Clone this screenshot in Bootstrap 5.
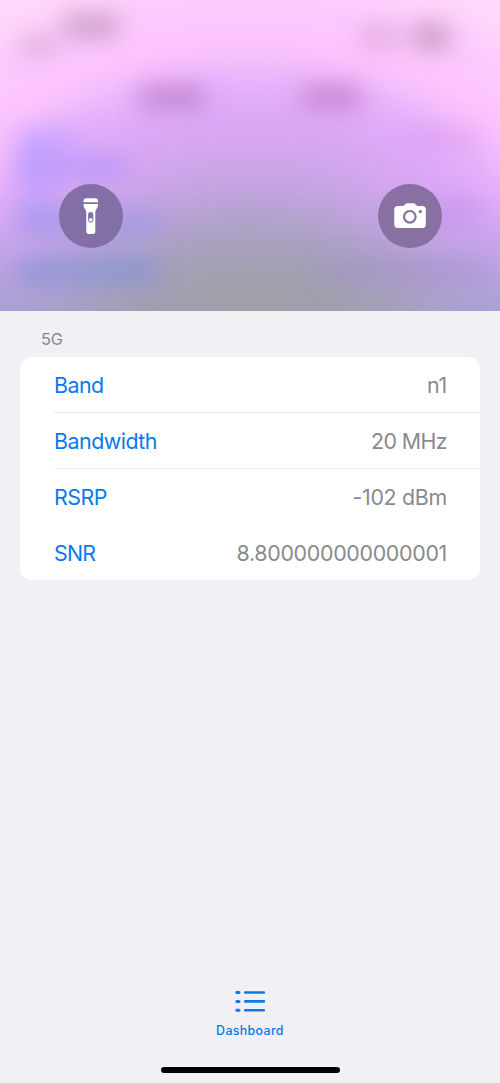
<!DOCTYPE html>
<html lang="en">
<head>
<meta charset="utf-8">
<meta name="viewport" content="width=device-width, initial-scale=1">
<title>Dashboard</title>
<link href="https://cdn.jsdelivr.net/npm/bootstrap@5.3.0/dist/css/bootstrap.min.css" rel="stylesheet">
<style>
body{background:#f1f0f5;font-family:Inter,"Liberation Sans",sans-serif;color:#8a8a8e}
.screen{height:1083px}
.cover{height:311px;padding:184px 58px 0 58.5px}
.backdrop{inset:0;width:100%;height:100%}
.round-btn{width:64px;height:64px;background:#816fa5;border:0}
.round-btn.cam{background:#8870a2}
.section-label{font-size:16.4px;line-height:20px;padding:18px 0 7.5px 41px;letter-spacing:-.3px}
.cells{margin:0 20px;background:#fff;border-radius:12px;padding-left:34px;height:223.5px}
.cell{height:56px;padding:2px 33px 0 0;font-size:21.4px;border-bottom:1px solid #ececef}
.cell:nth-child(2){border-color:#f3f3f5}
.cell:nth-child(n+3){border-color:transparent}
.cell dt{font-weight:400;color:#0a7aea}
.tab{color:#0a7aea;font-size:12.4px;font-weight:500;line-height:16px;letter-spacing:.35px;margin-bottom:28px}
.tab span{margin-top:10px}
.home-bar{width:179px;height:6px;background:#000;margin-bottom:10px}
</style>
</head>
<body>
<div class="screen d-flex flex-column overflow-hidden">
  <header class="cover position-relative overflow-hidden d-flex justify-content-between align-items-start">
    <svg class="backdrop position-absolute" viewBox="0 0 500 311" aria-hidden="true">
      <defs>
        <radialGradient id="glow" gradientUnits="userSpaceOnUse" cx="0" cy="0" r="1" gradientTransform="translate(250 330) scale(460 370)">
          <stop offset="0" stop-color="#a09fa8"/>
          <stop offset=".14" stop-color="#a2a0ae"/>
          <stop offset=".24" stop-color="#aca2c2"/>
          <stop offset=".34" stop-color="#baa3d6"/>
          <stop offset=".44" stop-color="#cba5e8"/>
          <stop offset=".57" stop-color="#dca8f5"/>
          <stop offset=".66" stop-color="#e6affb"/>
          <stop offset=".72" stop-color="#f3bcfd"/>
          <stop offset=".79" stop-color="#fdc6fd"/>
          <stop offset=".9" stop-color="#fdcafd"/>
          <stop offset="1.08" stop-color="#fed9fb"/>
        </radialGradient>
        <radialGradient id="haze" gradientUnits="userSpaceOnUse" cx="0" cy="0" r="1" gradientTransform="translate(250 350) scale(300 150)">
          <stop offset="0" stop-color="#a09fa8"/>
          <stop offset=".5" stop-color="#a19fab" stop-opacity=".7"/>
          <stop offset="1" stop-color="#a7a0c8" stop-opacity="0"/>
        </radialGradient>
        <linearGradient id="shade" x1="0" y1="0" x2="0" y2="1">
          <stop offset=".62" stop-color="#a39fda" stop-opacity="0"/>
          <stop offset="1" stop-color="#a39fd2" stop-opacity=".85"/>
        </linearGradient>
        <linearGradient id="sides" x1="0" y1="0" x2="1" y2="0">
          <stop offset="0" stop-color="#fff"/>
          <stop offset=".42" stop-color="#000"/>
          <stop offset=".58" stop-color="#000"/>
          <stop offset="1" stop-color="#fff"/>
        </linearGradient>
        <mask id="edges"><rect width="500" height="311" fill="url(#sides)"/></mask>
        <filter id="base" filterUnits="userSpaceOnUse" x="-80" y="-80" width="660" height="480"><feGaussianBlur stdDeviation="10"/></filter>
        <filter id="soft" filterUnits="userSpaceOnUse" x="-60" y="-60" width="620" height="440"><feGaussianBlur stdDeviation="12"/></filter>
      </defs>
      <rect x="-50" y="-50" width="600" height="411" fill="url(#glow)" filter="url(#base)"/>
      <rect width="500" height="311" fill="url(#shade)" mask="url(#edges)"/>
      <rect width="500" height="311" fill="url(#haze)"/>
      <g filter="url(#soft)">
        <rect x="64" y="15" width="54" height="22" fill="#b58aae" opacity=".72"/>
        <rect x="20" y="38" width="38" height="16" fill="#c091b6" opacity=".55"/>
        <rect x="362" y="29" width="28" height="18" fill="#c088b8" opacity=".6"/>
        <rect x="395" y="30" width="20" height="15" fill="#c088b8" opacity=".4"/>
        <rect x="418" y="26" width="30" height="22" fill="#b080a4" opacity=".78"/>
        <rect x="140" y="87" width="64" height="20" fill="#b070ba" opacity=".74"/>
        <rect x="303" y="87" width="58" height="20" fill="#b26fb9" opacity=".74"/>
        <rect x="405" y="130" width="75" height="16" fill="#d08de8" opacity=".45"/>
        <rect x="18" y="130" width="62" height="16" fill="#b69eff" opacity=".75"/>
        <rect x="18" y="158" width="108" height="19" fill="#ac92ff" opacity=".8"/>
        <rect x="18" y="140" width="38" height="90" fill="#b09aff" opacity=".45"/>
        <rect x="18" y="212" width="139" height="20" fill="#8f94e6" opacity=".65"/>
        <rect x="18" y="260" width="140" height="23" fill="#7b90d2" opacity=".68"/>
        <rect x="430" y="195" width="50" height="36" fill="#bd88ef" opacity=".35"/>
        <rect x="325" y="262" width="160" height="18" fill="#9384be" opacity=".4"/>
      </g>
    </svg>
    <button class="round-btn rounded-circle position-relative p-0" aria-label="Flashlight">
      <svg class="d-block" width="64" height="64" viewBox="0 0 64 64">
        <path fill="#fff" d="M27.500 14.200h8.500a3 3 0 0 1 3 3v1H24.500v-1a3 3 0 0 1 3-3ZM24.500 20h14.500v1.200c0 3-2.700 4.300-2.700 7V47.500q0 2.500-2.500 2.500h-4q-2.500 0-2.500-2.500V28.200c0-2.700-2.800-4-2.800-7Z"/>
        <rect x="29.100" y="28" width="5.200" height="10.400" rx="2.600" fill="#816fa5"/>
        <circle cx="31.700" cy="35.700" r="1.800" fill="#fff"/>
      </svg>
    </button>
    <button class="round-btn cam rounded-circle position-relative p-0" aria-label="Camera">
      <svg class="d-block" width="64" height="64" viewBox="0 0 64 64">
        <path fill="#fff" d="M19.800 22h4.500c2.300 0 2.600-2.800 5-2.800h6c2.400 0 2.700 2.800 5 2.800h4q3.500 0 3.500 3.500V40.500q0 3.500-3.500 3.500H19.800q-3.500 0-3.500-3.500V25.500q0-3.500 3.500-3.500Z"/>
        <circle cx="31.800" cy="32.800" r="5.800" fill="none" stroke="#8870a2" stroke-width="2.200"/>
        <circle cx="42.300" cy="27.600" r="1.600" fill="#8870a2"/>
      </svg>
    </button>
  </header>
  <main class="flex-grow-1">
    <div class="section-label">5G</div>
    <dl class="cells mb-0">
      <div class="cell d-flex justify-content-between align-items-center"><dt style="letter-spacing:-.55px">Band</dt><dd class="mb-0" style="letter-spacing:-.2px">n1</dd></div>
      <div class="cell d-flex justify-content-between align-items-center"><dt style="letter-spacing:-.5px">Bandwidth</dt><dd class="mb-0" style="letter-spacing:-.6px">20 MHz</dd></div>
      <div class="cell d-flex justify-content-between align-items-center"><dt style="letter-spacing:-.5px">RSRP</dt><dd class="mb-0" style="letter-spacing:-.3px">-102 dBm</dd></div>
      <div class="cell d-flex justify-content-between align-items-center"><dt style="letter-spacing:-.8px">SNR</dt><dd class="mb-0" style="letter-spacing:-.31px">8.800000000000001</dd></div>
    </dl>
  </main>
  <footer class="d-flex flex-column align-items-center">
    <a class="tab d-flex flex-column align-items-center text-decoration-none" href="#">
      <svg width="32" height="24" viewBox="0 0 32 24" fill="none" stroke="currentColor" stroke-linecap="round">
        <path stroke-width="2.600" d="M11.200 3.500H29.800M11.200 12.400H29.800M11.200 21.300H29.800"/>
        <path stroke-width="3" d="M2.800 3.500h2.200M2.800 12.400h2.200M2.800 21.300h2.200"/>
      </svg>
      <span>Dashboard</span>
    </a>
    <div class="home-bar rounded-pill"></div>
  </footer>
</div>
<script src="https://cdn.jsdelivr.net/npm/bootstrap@5.3.0/dist/js/bootstrap.bundle.min.js"></script>
</body>
</html>
